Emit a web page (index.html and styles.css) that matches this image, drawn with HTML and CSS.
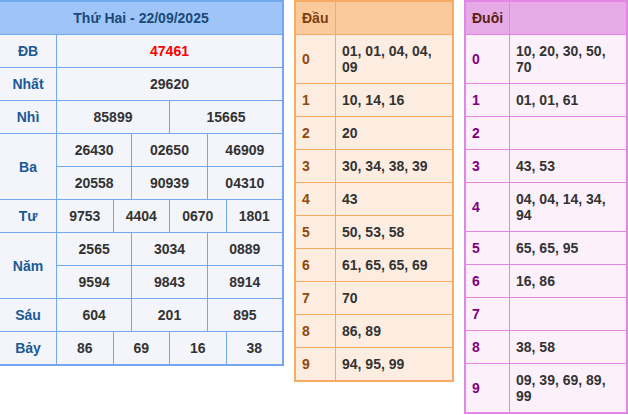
FILE: index.html
```html
<!DOCTYPE html>
<html lang="vi">
<head>
<meta charset="utf-8">
<link rel="stylesheet" href="styles.css">
</head>
<body>
<div class="page">
  <div class="kq">
    <div class="kq-head">Thứ Hai - 22/09/2025</div>

    <div class="lbl">ĐB</div>
    <div class="num s12 db">47461</div>

    <div class="lbl">Nhất</div>
    <div class="num s12">29620</div>

    <div class="lbl">Nhì</div>
    <div class="num s6">85899</div>
    <div class="num s6">15665</div>

    <div class="lbl r2">Ba</div>
    <div class="num s4">26430</div>
    <div class="num s4">02650</div>
    <div class="num s4">46909</div>
    <div class="num s4">20558</div>
    <div class="num s4">90939</div>
    <div class="num s4">04310</div>

    <div class="lbl">Tư</div>
    <div class="num s3">9753</div>
    <div class="num s3">4404</div>
    <div class="num s3">0670</div>
    <div class="num s3">1801</div>

    <div class="lbl r2">Năm</div>
    <div class="num s4">2565</div>
    <div class="num s4">3034</div>
    <div class="num s4">0889</div>
    <div class="num s4">9594</div>
    <div class="num s4">9843</div>
    <div class="num s4">8914</div>

    <div class="lbl">Sáu</div>
    <div class="num s4">604</div>
    <div class="num s4">201</div>
    <div class="num s4">895</div>

    <div class="lbl">Bảy</div>
    <div class="num s3">86</div>
    <div class="num s3">69</div>
    <div class="num s3">16</div>
    <div class="num s3">38</div>
  </div>

  <div class="lt dau">
    <div class="lt-head">Đầu</div><div class="lt-head"></div>
    <div class="k">0</div><div class="v">01, 01, 04, 04, 09</div>
    <div class="k">1</div><div class="v">10, 14, 16</div>
    <div class="k">2</div><div class="v">20</div>
    <div class="k">3</div><div class="v">30, 34, 38, 39</div>
    <div class="k">4</div><div class="v">43</div>
    <div class="k">5</div><div class="v">50, 53, 58</div>
    <div class="k">6</div><div class="v">61, 65, 65, 69</div>
    <div class="k">7</div><div class="v">70</div>
    <div class="k">8</div><div class="v">86, 89</div>
    <div class="k">9</div><div class="v">94, 95, 99</div>
  </div>

  <div class="lt duoi">
    <div class="lt-head">Đuôi</div><div class="lt-head"></div>
    <div class="k">0</div><div class="v">10, 20, 30, 50, 70</div>
    <div class="k">1</div><div class="v">01, 01, 61</div>
    <div class="k">2</div><div class="v"></div>
    <div class="k">3</div><div class="v">43, 53</div>
    <div class="k">4</div><div class="v">04, 04, 14, 34, 94</div>
    <div class="k">5</div><div class="v">65, 65, 95</div>
    <div class="k">6</div><div class="v">16, 86</div>
    <div class="k">7</div><div class="v"></div>
    <div class="k">8</div><div class="v">38, 58</div>
    <div class="k">9</div><div class="v">09, 39, 69, 89, 99</div>
  </div>
</div>
</body>
</html>
```
FILE: styles.css
```css
html, body {
  margin: 0;
  padding: 0;
  background: #ffffff;
}

body {
  font-family: "Liberation Sans", Arial, sans-serif;
  font-size: 14px;
  font-weight: bold;
  line-height: 16px;
}

.page {
  display: flex;
  align-items: flex-start;
  gap: 10px;
  margin-left: -2px;
}

/* main results table */
.kq {
  width: 282px;
  display: grid;
  grid-template-columns: 56px repeat(12, 1fr);
  grid-auto-rows: 32px;
  gap: 1px;
  background: #74a8ee;
  border: 2px solid #74a8ee;
  flex: none;
}

.kq > div {
  display: flex;
  align-items: center;
  justify-content: center;
  background: #f3f5fa;
}

.kq .kq-head {
  grid-column: 1 / -1;
  background: #9fc5f8;
  color: #1b4a78;
}

.lbl {
  color: #1a5a96;
}

.r2 {
  grid-row: span 2;
}

.num {
  color: #333333;
}

.s12 { grid-column: span 12; }
.s6 { grid-column: span 6; }
.s4 { grid-column: span 4; }
.s3 { grid-column: span 3; }

.kq .db {
  color: #ff0000;
}

/* loto tables */
.lt {
  display: grid;
  gap: 1px;
  flex: none;
}

.lt > div {
  padding: 8px 6px;
  min-height: 16px;
}

.lt .k {
  display: flex;
  align-items: center;
}

.lt .v {
  color: #333333;
}

.dau {
  grid-template-columns: 39px 116px;
  background: #f6aa62;
  border: 2px solid #f6aa62;
}

.dau > div {
  background: #fdede1;
}

.dau .lt-head {
  background: #fbca9c;
  color: #7a3d10;
}

.dau .k {
  color: #8f4a0c;
}

.duoi {
  grid-template-columns: 43px 116px;
  background: #e487e4;
  border: 2px solid #e487e4;
}

.duoi > div {
  background: #fcf0fb;
}

.duoi .lt-head {
  background: #e6aae6;
  color: #5a2012;
}

.duoi .k {
  color: #800080;
}
```
